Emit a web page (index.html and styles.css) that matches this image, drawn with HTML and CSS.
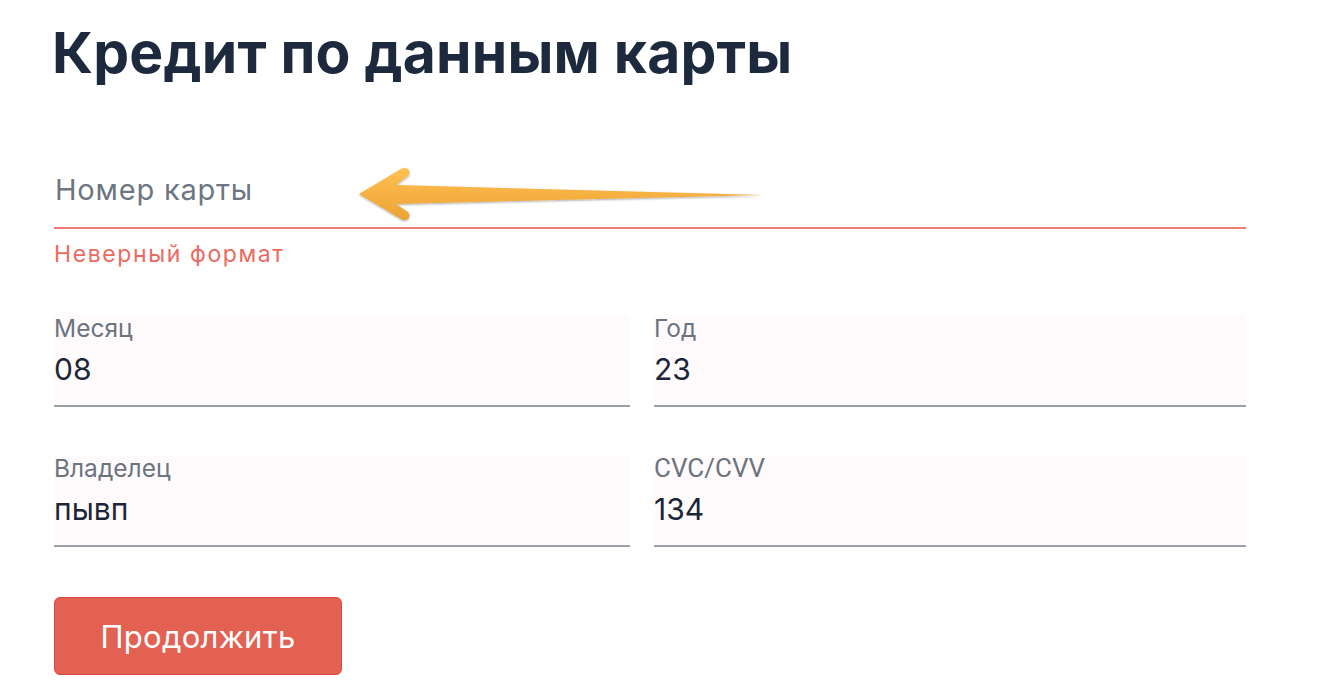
FILE: index.html
```html
<!DOCTYPE html>
<html lang="ru">
<head>
<meta charset="utf-8">
<title>Кредит по данным карты</title>
<link rel="stylesheet" href="styles.css">
</head>
<body>
<main class="page">
  <h1 class="title">Кредит по данным карты</h1>
  <div class="card-field">
    <div class="card-input">Номер карты</div>
    <div class="error">Неверный формат</div>
    <svg class="arrow" width="420" height="60" viewBox="0 0 420 60" aria-hidden="true">
      <defs>
        <linearGradient id="ag" x1="0" y1="0" x2="0" y2="1">
          <stop offset="0" stop-color="#ffc04f"/>
          <stop offset="1" stop-color="#eda235"/>
        </linearGradient>
        <filter id="sh" x="-5%" y="-20%" width="110%" height="150%">
          <feDropShadow dx="0" dy="1" stdDeviation="0.8" flood-color="#000" flood-opacity="0.35"/>
        </filter>
      </defs>
      <path filter="url(#sh)" fill="url(#ag)" d="M2 29 L44 4 C50 1 55 6 51 11 L39 20 L406 30 L39 39 L51 47 C55 52 50 57 44 54 Z"/>
    </svg>
  </div>
  <div class="grid">
    <div class="field"><div class="label">Месяц</div><div class="value">08</div></div>
    <div class="field"><div class="label">Год</div><div class="value">23</div></div>
    <div class="field"><div class="label">Владелец</div><div class="value">пывп</div></div>
    <div class="field"><div class="label label-latin">CVC/CVV</div><div class="value">134</div></div>
  </div>
  <button class="btn">Продолжить</button>
</main>
</body>
</html>
```

FILE: styles.css
```css
html, body {
  margin: 0;
  padding: 0;
  background: #ffffff;
}
.page {
  width: 1192px;
  padding: 20px 0 0 54px;
  font-family: "Inter", "Noto Sans", sans-serif;
}
.title {
  margin: 0 0 0 -2px;
  font-size: 57px;
  font-weight: 700;
  line-height: 66px;
  color: #1d2a3e;
  letter-spacing: 0.2px;
}
.card-field {
  position: relative;
  margin-top: 86px;
}
.card-input {
  height: 55px;
  line-height: 36px;
  padding-left: 1px;
  font-size: 29px;
  color: #6d7582;
  letter-spacing: 0.8px;
  border-bottom: 2px solid #ef7b73;
}
.error {
  margin-top: 11px;
  font-size: 23px;
  line-height: 28px;
  color: #ec6a60;
  letter-spacing: 1.6px;
}
.arrow {
  position: absolute;
  left: 303px;
  top: -7px;
}
.grid {
  display: grid;
  grid-template-columns: 576px 592px;
  column-gap: 24px;
  row-gap: 48px;
  margin-top: 47px;
}
.field {
  height: 90px;
  background: #fffbfc;
  border-bottom: 2px solid #9aa0a8;
}
.label {
  font-size: 24.5px;
  line-height: 26px;
  color: #6c7480;
}
.label-latin {
  font-family: "Roboto", "Inter", sans-serif;
  font-size: 26px;
}
.value {
  margin-top: 11px;
  font-size: 30px;
  line-height: 34px;
  color: #1b2638;
}
.btn {
  display: block;
  margin-top: 50px;
  width: 288px;
  height: 78px;
  background: #e26152;
  border: 1.5px solid #d9473b;
  border-radius: 6px;
  color: #ffffff;
  font-family: "Inter", "Noto Sans", sans-serif;
  font-size: 31px;
  letter-spacing: 0.3px;
  padding: 0;
}
```
